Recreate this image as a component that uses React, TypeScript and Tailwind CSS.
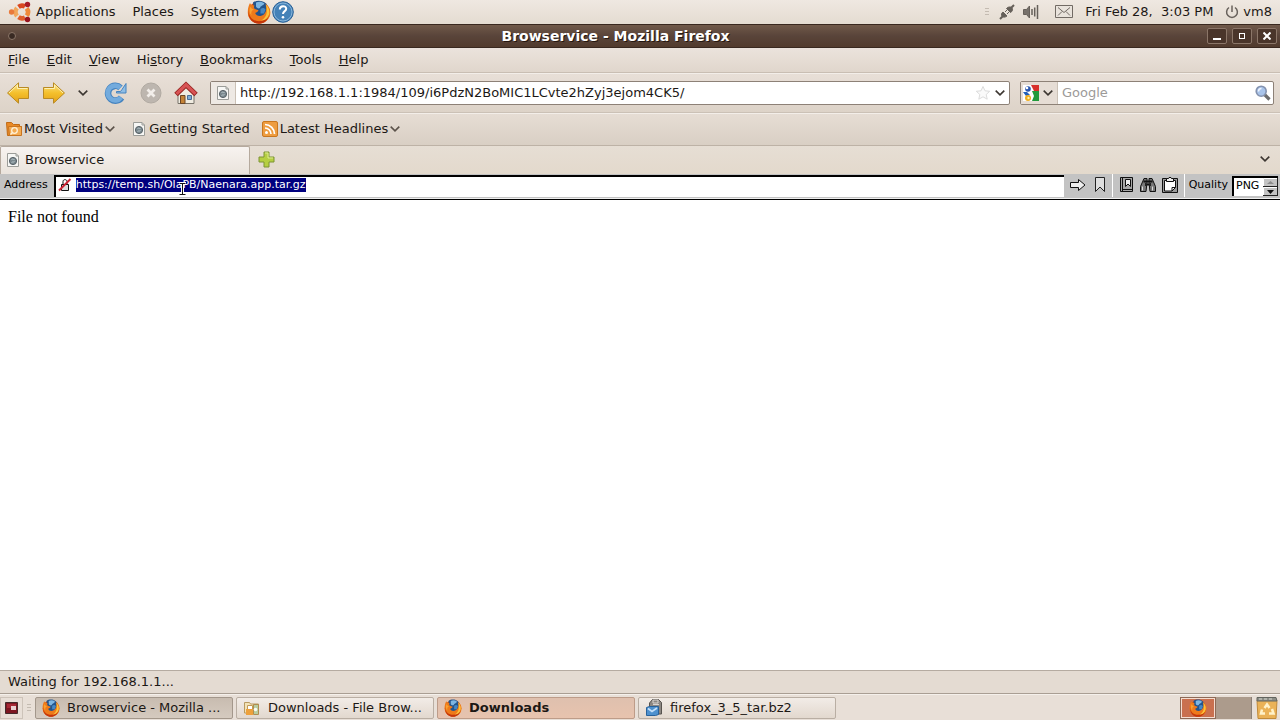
import React from "react";

interface MenuEntry {
  hotkey: string;
  before?: string;
  after: string;
}

const menus: MenuEntry[] = [
  { hotkey: "F", after: "ile" },
  { hotkey: "E", after: "dit" },
  { hotkey: "V", after: "iew" },
  { before: "Hi", hotkey: "s", after: "tory" },
  { hotkey: "B", after: "ookmarks" },
  { hotkey: "T", after: "ools" },
  { hotkey: "H", after: "elp" },
];

function Chevron({ className = "text-[#3c3631]" }: { className?: string }) {
  return (
    <svg className={className} width="10" height="6" viewBox="0 0 10 6" fill="none" stroke="currentColor" strokeWidth="1.600">
      <path d="M.7 .7L5 4.8L9.3 .7" />
    </svg>
  );
}

function FirefoxIcon({ size = 18 }: { size?: number }) {
  return (
    <svg width={size} height={size} viewBox="0 0 24 24">
      <circle cx="12" cy="12.500" r="11" fill="#d9500f" />
      <path d="M6 2.500C9.500 0 15.500 0 19 3.500c2.500 3 2.500 9-.5 12.500-3 3-8 3-11 0z" fill="#23548c" />
      <path d="M9 2.500c3-1.500 6-1 8.500 1-1.500 2.500-4 2-4.500 4.500-1.500 1-3.500 0-4-1.500z" fill="#7db6e2" />
      <path d="M13.500 9c2-1.500 4-1 5 .5l-1.500 4-3.500 0z" fill="#4687c2" />
      <path d="M3 3c.8 1.800 2.200 2.500 4.500 2.500C6.500 7 6.800 8.300 8 9l3.500 1.200c-.5 1.600-2 2.200-3.300 2.800.8 2.500 3.500 3.500 6 2.800 4-1.200 6.300-5.300 4.300-11.800 4 2.500 6 7 4.300 12-1.500 4.500-5.800 7.300-10.800 7.300C5.800 23.300 1 18.800.8 12.800.7 9 1.500 5.500 3 3z" fill="#ee7a1a" />
      <path d="M1.500 10c0 5.500 3 10 8.500 11 5 .8 9.500-1.800 12-7-.3 5.500-4.500 9.800-10 9.800C5.500 23.800.5 18 1.500 10z" fill="#c5370b" />
      <path d="M19 4.500c3.500 3.500 4.300 8.500 2.300 12-1.500 2.800-4.300 4.200-7.300 4 5.500-2.500 7-8.500 5-16z" fill="#fdc238" />
      <path d="M3.500 6.500c.5 1.700 1.500 2.500 3.500 3-2.300.6-3.300 3-2.500 6-2.300-2.500-2.500-6-1-9z" fill="#f9a231" />
    </svg>
  );
}

function UbuntuIcon() {
  return (
    <svg width="24" height="22" viewBox="0 0 24 22" fill="none">
      <path d="M10.500 5.800A6.200 6.200 0 0 1 17 5.500" stroke="#d9481f" strokeWidth="4.600" />
      <path d="M18.700 7.300A6.200 6.200 0 0 1 18.700 14.700" stroke="#ef8a3a" strokeWidth="4.600" />
      <path d="M9 7A6.200 6.200 0 0 0 9 15" stroke="#f2a65a" strokeWidth="4.600" />
      <path d="M10.500 16.200a6.200 6.200 0 0 0 6.500 .3" stroke="#df5f2c" strokeWidth="4.600" />
      <circle cx="3.600" cy="11" r="2.700" fill="#e9793a" />
      <circle cx="19.500" cy="3.500" r="2.700" fill="#a81c26" />
      <circle cx="19.500" cy="18.500" r="2.700" fill="#981420" />
    </svg>
  );
}

function HelpIcon() {
  return (
    <svg width="22" height="22" viewBox="0 0 22 22" fill="none">
      <circle cx="11" cy="11" r="10.300" fill="#4482b8" stroke="#275f96" />
      <circle cx="11" cy="11" r="9" stroke="#8ab6da" />
      <path d="M7.800 8.500c0-4.400 6.400-4.200 6.400-.8 0 2.500-3.200 2.400-3.200 5.300" stroke="#fff" strokeWidth="2" />
      <circle cx="11" cy="16.300" r="1.300" fill="#fff" />
    </svg>
  );
}

function PageIcon() {
  return (
    <svg width="16" height="16" viewBox="0 0 16 16" fill="none">
      <path d="M2.500 1.500h8.500l2.500 2.500v10.500h-11z" fill="#f7f7f5" stroke="#9b9c98" />
      <path d="M11 1.500v2.500h2.500" stroke="#9b9c98" />
      <circle cx="8" cy="9" r="3.600" fill="#7b898f" stroke="#586268" />
      <path d="M6.500 7.500c1.500-1 2 .5 3 0M6.500 10.500c1-1 2 0 3-1" stroke="#b9c7cc" />
    </svg>
  );
}

function ArrowIcon({ flip = false }: { flip?: boolean }) {
  return (
    <svg className={flip ? "-scale-x-100" : ""} width="24" height="22" viewBox="0 0 24 22" fill="none">
      <defs>
        <linearGradient id="gold" x1="0" y1="0" x2="0" y2="1">
          <stop offset="0" stopColor="#fbe488" />
          <stop offset=".5" stopColor="#f4c02c" />
          <stop offset="1" stopColor="#e3a018" />
        </linearGradient>
      </defs>
      <path d="M1.500 5.500h10V.8L22.500 11 11.500 21.200v-4.700h-10z" fill="url(#gold)" stroke="#b98a24" />
      <path d="M2.500 6.500h10V3L21 11" stroke="#fdf1b5" />
    </svg>
  );
}

function ReloadIcon() {
  return (
    <svg width="24" height="22" viewBox="0 0 24 22" fill="none">
      <path d="M17.500 15.500A7.400 7.400 0 1 1 16.500 5.800" stroke="#4583bf" strokeWidth="6.600" />
      <path d="M17 15.500A7.400 7.400 0 1 1 16.500 5.800" stroke="#73abdd" strokeWidth="4.800" />
      <path d="M22 1.500v9.500h-9.500V9.500h4l1.500-2z" fill="#8dbde6" stroke="#4583bf" />
    </svg>
  );
}

function StopIcon() {
  return (
    <svg width="22" height="22" viewBox="0 0 22 22" fill="none">
      <circle cx="11" cy="11" r="10" fill="#bdb6af" stroke="#b1aaa2" />
      <path d="M7.500 7.500l7 7m0-7l-7 7" stroke="#f2eeea" strokeWidth="2.800" />
    </svg>
  );
}

function HomeIcon() {
  return (
    <svg width="24" height="24" viewBox="0 0 24 24" fill="none">
      <path d="M4 12L12 5l8 7v10.500H4z" fill="#f0ece1" stroke="#77736a" />
      <path d="M6.500 14.500h4.500v8H6.500z" fill="#c58336" stroke="#6b4524" />
      <path d="M13.500 14.500h4v4h-4z" fill="#7fabd4" stroke="#486d96" />
      <path d="M2 13.500L12 4l10 9.500" stroke="#96231f" strokeWidth="5" />
      <path d="M2.500 12.800L12 3.800l9.500 9" stroke="#d75354" strokeWidth="3.200" />
    </svg>
  );
}

function StarIcon() {
  return (
    <svg width="16" height="16" viewBox="0 0 16 16" fill="none">
      <path d="M8 1.500l2 4.300 4.700.5-3.500 3.200 1 4.700L8 11.800l-4.200 2.400 1-4.700L1.300 6.300 6 5.800z" fill="#fafafa" stroke="#dcdcdc" />
    </svg>
  );
}

function GoogleIcon() {
  return (
    <svg width="16" height="16" viewBox="0 0 16 16">
      <path d="M0 0h16v16H0z" fill="#fff" />
      <path d="M8 0h8v6h-5z" fill="#d8302c" />
      <path d="M9 6h7v10H9l2-5z" fill="#229a3c" />
      <circle cx="5" cy="4" r="2.800" fill="#2856b0" />
      <circle cx="4" cy="3" r="1.300" fill="#fff" />
      <path d="M0 7l4 0 3 3-4 1z" fill="#2460b8" />
      <circle cx="5" cy="13" r="3" fill="#f1ae1c" />
      <circle cx="5.500" cy="13" r="1.200" fill="#fff1b5" />
    </svg>
  );
}

function MagnifierIcon() {
  return (
    <svg width="16" height="16" viewBox="0 0 16 16" fill="none">
      <path d="M9.500 9.500l5 5" stroke="#6c6c6c" strokeWidth="3.200" />
      <circle cx="6.200" cy="6.200" r="5" fill="#a9c4ea" stroke="#8492ae" strokeWidth="1.600" />
      <path d="M3.500 6.500c0-2 1-3 3-3" stroke="#f1f6ff" strokeWidth="1.500" />
    </svg>
  );
}

function MostVisitedIcon() {
  return (
    <svg width="16" height="16" viewBox="0 0 16 16" fill="none">
      <path d="M.5 1.500h5l2 2h6v2h2l-1 9h-13z" fill="#e98a26" stroke="#c06a15" />
      <path d="M2.500 5.500h13v9h-12z" fill="#f4ab52" stroke="#c87420" />
      <circle cx="8.500" cy="9.500" r="2.800" stroke="#fff1d8" strokeWidth="1.300" />
      <path d="M6.500 11.500l-2 2" stroke="#fff1d8" strokeWidth="1.500" />
    </svg>
  );
}

function FeedIcon() {
  return (
    <svg width="16" height="16" viewBox="0 0 16 16" fill="none">
      <rect x=".5" y=".5" width="15" height="15" rx="1.500" fill="#ee9d40" stroke="#c9771f" />
      <circle cx="4.500" cy="11.500" r="1.500" fill="#fff" />
      <path d="M3 7a6 6 0 0 1 6 6M3 3.500A9.500 9.500 0 0 1 12.500 13" stroke="#fff" strokeWidth="1.700" />
    </svg>
  );
}

function PlusIcon() {
  return (
    <svg width="17" height="17" viewBox="0 0 17 17">
      <path d="M6 1h5v5h5v5h-5v5H6v-5H1V6h5z" fill="#b6cf42" stroke="#7c9432" />
      <path d="M7 2h3v5h5" fill="none" stroke="#dcea90" />
    </svg>
  );
}

function NetworkIcon() {
  return (
    <svg width="16" height="16" viewBox="0 0 16 16" fill="none" stroke="#66605a">
      <path d="M1 15l4-4M11.500 4.500L15 1" strokeWidth="2" />
      <path d="M4 8l4 4c-2 1.500-4 1.500-5 0-1-1.300-.5-3 1-4z" fill="#66605a" />
      <path d="M7.500 4.500l4 4C13.500 7.500 14 5.500 13 4s-4-1.500-5.500.5zM6 8l2-2M8 10l2-2" fill="#66605a" />
    </svg>
  );
}

function VolumeIcon() {
  return (
    <svg width="16" height="16" viewBox="0 0 16 16" fill="none" stroke="#66605a">
      <path d="M.5 5.500h3l3-3.500v12l-3-3.500h-3z" fill="#77716b" />
      <path d="M9 5v6M11.700 3.500v9M14.500 1v14" strokeWidth="1.500" />
    </svg>
  );
}

function MailIcon() {
  return (
    <svg width="18" height="13" viewBox="0 0 18 13" fill="none" stroke="#716a64">
      <path d="M.5 .5h17v12H.5z" fill="#e9e3dc" />
      <path d="M3 2.500l6 5 6-5M3 10.500l4-4M15 10.500l-4-4" />
    </svg>
  );
}

function PowerIcon() {
  return (
    <svg width="14" height="14" viewBox="0 0 14 14" fill="none" stroke="#69625c" strokeWidth="1.500">
      <path d="M4 2.500a5.400 5.400 0 1 0 6 0M7 .5v6.500" />
    </svg>
  );
}

function FileBrowserIcon() {
  return (
    <svg width="18" height="16" viewBox="0 0 18 16" fill="none">
      <path d="M1.500 2.500h5l1 1.500h8v9H1.500z" fill="#f3e3b8" stroke="#b89a60" />
      <path d="M4.500 5.500h5v8h-5z" fill="#fff" stroke="#c29a55" />
      <path d="M10.500 4.500h5v10h-5z" fill="#b8cda0" stroke="#b08d50" />
      <path d="M3 9h7v6H3z" fill="#eda13c" />
      <circle cx="12.500" cy="9.500" r="1.800" fill="#f8faf5" />
    </svg>
  );
}

function ArchiveIcon() {
  return (
    <svg width="18" height="17" viewBox="0 0 18 17" fill="none">
      <path d="M4.500 8V4l3-3.500h6l3 3V15h-4" fill="#8c8782" stroke="#57534f" />
      <path d="M8 1h5v3H8zM8 5.500h6" stroke="#d9d4cf" />
      <path d="M1.500 8.500l3-1h9v8l-3 1h-9z" fill="#4e91ce" stroke="#28629b" />
      <path d="M3 9.500l4 3 5-3.500" stroke="#c4e0fa" strokeWidth="1.600" />
    </svg>
  );
}

function TrashIcon() {
  return (
    <svg width="22" height="22" viewBox="0 0 22 22" fill="none">
      <path d="M1 3.500h20l-1 18h-18z" fill="#eab257" stroke="#c08a3a" />
      <path d="M1 .5h19l1 3.500H1z" fill="#8c8d86" stroke="#62645e" />
      <path d="M3 2h3m2 0h3m2 0h3" stroke="#d5d8d0" />
      <path d="M8.500 11L11 7.500l2.500 3.500M6 12.500l-1 4h4M16 12l1.500 4.500H13" stroke="#fff2ca" strokeWidth="2.500" />
    </svg>
  );
}

function NoLockIcon() {
  return (
    <svg width="14" height="14" viewBox="0 0 14 14" fill="none">
      <path d="M3.500 6.500h7v6h-7z" fill="#ddd" stroke="#111" />
      <path d="M5 6V3.500C5 1 9 1 9 3.500V6" stroke="#111" />
      <path d="M1 12.500L12.500 1" stroke="#cc2233" strokeWidth="2" />
    </svg>
  );
}

function GoIcon() {
  return (
    <svg width="16" height="14" viewBox="0 0 16 14" fill="none">
      <path d="M.5 4.500h8v-3l6.500 5.500-6.500 5.500v-3h-8z" fill="#eee" stroke="#111" />
    </svg>
  );
}

function BookmarkIcon() {
  return (
    <svg width="12" height="16" viewBox="0 0 12 16" fill="none">
      <path d="M1.500 .5h9v14L6 10l-4.500 4.500z" fill="#dedede" stroke="#222" />
    </svg>
  );
}

function BookIcon() {
  return (
    <svg width="15" height="16" viewBox="0 0 15 16" fill="none">
      <path d="M1.500 .5h12v14h-12z" fill="#a7a7a7" stroke="#111" />
      <path d="M3.500 1v14M4 12.500h10" stroke="#111" />
      <path d="M6.500 2.500h5v7L9 7l-2.500 2.500z" fill="#eee" stroke="#111" />
    </svg>
  );
}

function BinocularsIcon() {
  return (
    <svg width="16" height="16" viewBox="0 0 16 16" fill="none" stroke="#111">
      <path d="M4 1.500h3v4l-1 9H.5v-5zM12 1.500H9v4l1 9h5.500v-5z" fill="#777" />
      <path d="M3.500 4.500h9M6.500 7.500h3" strokeWidth="2" />
      <path d="M2.500 9.500v4M12.500 9.500v4" stroke="#ddd" />
      <path d="M5.500 6v3M10.500 6v3" stroke="#222" />
    </svg>
  );
}

function ClipboardIcon() {
  return (
    <svg width="16" height="16" viewBox="0 0 16 16" fill="none" stroke="#111">
      <path d="M.5 1.500h15v14H.5z" fill="#999" />
      <path d="M2.500 3.500h11v7l-3.500 3.500H2.500z" fill="#fff" />
      <path d="M13.500 10.500H10V14" />
      <path d="M4.500 1.500h2c0-1.500 3-1.500 3 0h2v3h-7z" fill="#eee" />
    </svg>
  );
}

function IBeam() {
  return (
    <svg width="9" height="16" viewBox="0 0 9 16" fill="none">
      <path d="M1 2.500h7M4.500 2.500v11M1 13.500h7" stroke="#fff" strokeWidth="3" />
      <path d="M1.500 2.500h6M4.500 2.500v11M1.500 13.500h6" stroke="#111" />
    </svg>
  );
}

function Grip() {
  return (
    <span className="flex w-2 flex-col gap-0.5 px-0.5">
      <span className="h-px bg-[#c4bbb1]" />
      <span className="h-px bg-[#c4bbb1]" />
      <span className="h-px bg-[#c4bbb1]" />
    </span>
  );
}

function TopPanel() {
  return (
    <header className="flex h-6 shrink-0 items-center bg-linear-to-b from-[#efe8e1] to-[#e4dcd1] pb-px text-[13px]">
      <button className="flex items-center gap-1 pl-2" type="button">
        <UbuntuIcon />
        Applications
      </button>
      <button className="pl-[17px]" type="button">Places</button>
      <button className="pl-[17px]" type="button">System</button>
      <button className="ml-2 flex" type="button" aria-label="Firefox"><FirefoxIcon size={24} /></button>
      <button className="ml-px flex" type="button" aria-label="Help"><HelpIcon /></button>

      <div className="ml-auto flex items-center pr-2">
        <Grip />
        <span className="ml-2"><NetworkIcon /></span>
        <span className="ml-2"><VolumeIcon /></span>
        <span className="ml-4"><MailIcon /></span>
        <button className="ml-3 whitespace-pre" type="button">Fri Feb 28,  3:03 PM</button>
        <button className="ml-3 flex items-center gap-1" type="button">
          <PowerIcon />
          vm8
        </button>
      </div>
    </header>
  );
}

function TitleBar() {
  const button = "flex h-4 w-5 items-center justify-center rounded-xs border border-[#8b7668] bg-[#4a352a]";
  return (
    <div className="flex h-6 shrink-0 items-center border-y border-[#39281f] bg-linear-to-b from-[#705949] via-[#59443a] to-[#523b2d] pr-[3px] pl-2">
      <span className="h-2 w-2 rounded-full border border-[#8b7668] bg-[#392a23]" />
      <h1 className="flex-1 pl-2 text-center text-sm font-bold text-white [text-shadow:1px_1px_0_#251710]">
        Browservice - Mozilla Firefox
      </h1>
      <div className="flex gap-[5px]">
        <button className={button} type="button" aria-label="Minimize"><span className="mt-1.5 h-0.5 w-2 bg-white" /></button>
        <button className={button} type="button" aria-label="Maximize"><span className="h-1.5 w-1.5 border border-white" /></button>
        <button className={button} type="button" aria-label="Close">
          <svg width="8" height="8" viewBox="0 0 8 8" stroke="#fff" strokeWidth="2"><path d="M.5 .5l7 7m0-7l-7 7" /></svg>
        </button>
      </div>
    </div>
  );
}

function MenuBar() {
  return (
    <nav className="flex h-[25px] shrink-0 items-center gap-[17px] border-b border-[#c9beb3] bg-linear-to-b from-[#ebe3dc] to-[#e0d6cc] px-2 text-[13px]">
      {menus.map((menu) => (
        <button key={menu.hotkey + menu.after} type="button">
          {menu.before}
          <span className="underline">{menu.hotkey}</span>
          {menu.after}
        </button>
      ))}
    </nav>
  );
}

function Toolbar() {
  return (
    <div className="flex h-10 shrink-0 items-center border-t border-b border-t-[#f3eee9] border-b-[#cbc1b6] bg-linear-to-b from-[#e8dfd7] to-[#ddd3c8] px-1.5 text-[13px]">
      <button className="flex" type="button" aria-label="Back"><ArrowIcon flip /></button>
      <button className="ml-3 flex" type="button" aria-label="Forward"><ArrowIcon /></button>
      <button className="ml-3 flex" type="button" aria-label="History"><Chevron /></button>
      <button className="ml-4 flex" type="button" aria-label="Reload"><ReloadIcon /></button>
      <button className="ml-3 flex" type="button" aria-label="Stop"><StopIcon /></button>
      <button className="ml-3 flex" type="button" aria-label="Home"><HomeIcon /></button>

      <div className="ml-3 flex h-6 flex-1 items-center rounded-xs border border-[#8d8177] bg-white pr-1">
        <span className="flex h-full w-[25px] items-center justify-center border-r border-[#cbc1b6] bg-[#eee9e4]"><PageIcon /></span>
        <input
          className="min-w-0 flex-1 px-1 outline-none"
          aria-label="Location"
          defaultValue="http://192.168.1.1:1984/109/i6PdzN2BoMIC1LCvte2hZyj3ejom4CK5/"
        />
        <StarIcon />
        <button className="ml-1 flex" type="button" aria-label="Show history"><Chevron /></button>
      </div>

      <div className="ml-2.5 flex h-6 w-[254px] items-center rounded-xs border border-[#8d8177] bg-white pr-0.5">
        <button className="flex h-full w-[37px] items-center gap-1 border-r border-[#cbc1b6] bg-[#e6ddd5] pl-0.5" type="button" aria-label="Search engine">
          <GoogleIcon />
          <Chevron />
        </button>
        <input className="min-w-0 flex-1 px-1 outline-none placeholder:text-[#9c9a98]" aria-label="Search" placeholder="Google" />
        <button className="flex" type="button" aria-label="Search"><MagnifierIcon /></button>
      </div>
    </div>
  );
}

function BookmarksBar() {
  return (
    <div className="flex h-[33px] shrink-0 items-center gap-4 border-t border-b border-t-[#f3eee9] border-b-[#bdb2a6] bg-linear-to-b from-[#e6ddd4] to-[#d9cfc4] px-1.5 pb-0.5 text-[13px]">
      <button className="flex items-center gap-0.5" type="button"><MostVisitedIcon />Most Visited<Chevron className="text-[#5b524a]" /></button>
      <a className="flex items-center gap-0.5" href="#started"><PageIcon />Getting Started</a>
      <button className="-ml-1 flex items-center gap-0.5" type="button"><FeedIcon />Latest Headlines<Chevron className="text-[#5b524a]" /></button>
    </div>
  );
}

function TabStrip() {
  return (
    <div className="flex h-7 shrink-0 items-center bg-linear-to-b from-[#e6ded4] to-[#e3d9cc] pr-2.5 text-[13px]">
      <button className="flex h-full w-[250px] items-center gap-1 rounded-t-xs border-x border-t border-[#b5a99d] bg-linear-to-b from-[#f7f3f0] to-[#eae3dc] pb-0.5 pl-1" type="button">
        <PageIcon />
        Browservice
      </button>
      <button className="ml-2 flex pb-0.5" type="button" aria-label="New tab"><PlusIcon /></button>
      <button className="ml-auto flex pb-0.5" type="button" aria-label="List all tabs"><Chevron /></button>
    </div>
  );
}

function AddressBar() {
  return (
    <div className="flex h-[26px] shrink-0 items-stretch border-b border-black bg-[#c3c3c3] pb-0.5 text-[11px] text-black shadow-[inset_0_-1px_0_#eeeeee]">
      <label className="flex items-center px-1" htmlFor="address">Address</label>
      <div className="relative mt-px flex flex-1 items-center border-t-2 border-l-2 border-black bg-white pb-1 pl-0.5 ml-0.5">
        <NoLockIcon />
        <input
          id="address"
          className="field-sizing-content ml-1 h-3.5 bg-[#00007f] text-white outline-none"
          defaultValue="https://temp.sh/OlaPB/Naenara.app.tar.gz"
        />
        <span className="pointer-events-none absolute top-1 left-[122px]"><IBeam /></span>
      </div>
      <div className="flex items-center gap-2 border-r border-white px-1.5 pb-0.5">
        <button className="flex" type="button" aria-label="Go"><GoIcon /></button>
        <button className="flex" type="button" aria-label="Bookmark"><BookmarkIcon /></button>
      </div>
      <div className="flex items-center gap-1.5 border-r border-white px-1.5 pb-0.5">
        <button className="flex" type="button" aria-label="Bookmarks"><BookIcon /></button>
        <button className="flex" type="button" aria-label="Find"><BinocularsIcon /></button>
        <button className="flex" type="button" aria-label="Clipboard"><ClipboardIcon /></button>
      </div>
      <div className="flex items-center gap-1 pr-0.5 pl-1">
        <label htmlFor="quality">Quality</label>
        <div className="relative flex h-5 w-[46px] border-t-2 border-l-2 border-black bg-white">
          <select id="quality" className="w-full appearance-none pl-0.5 outline-none">
            <option>PNG</option>
            <option>JPEG</option>
          </select>
          <svg className="pointer-events-none absolute top-0 right-0" width="15" height="18" viewBox="0 0 15 18">
            <path d="M0 0h15v18H0z" fill="#c3c3c3" />
            <path d="M0 8.500h15M0 17.500h15M14.500 0v18" stroke="#222" />
            <path d="M.5 8V.5H14M.5 17V9.500H14" fill="none" stroke="#fff" />
            <path d="M4 6h7L7.500 3z" fill="#8d8d8d" />
            <path d="M4 12h7l-3.500 4z" fill="#111" />
          </svg>
        </div>
      </div>
    </div>
  );
}

function TaskBar() {
  const task = "flex h-[22px] w-[198px] items-center gap-[7px] rounded-xs border px-1.5 text-left";
  return (
    <footer className="flex h-[26px] shrink-0 items-center border-t border-[#f5f0eb] bg-[#e8dfd7] text-[13px]">
      <button className="flex h-[22px] w-[23px] items-center justify-center border border-[#cdc3b9]" type="button" aria-label="Show desktop">
        <svg width="13" height="12" viewBox="0 0 13 12">
          <path d="M.5 .5h12v11H.5z" fill="#7d1722" stroke="#442a2b" />
          <path d="M2 2h9v4H2z" fill="#a62835" />
          <path d="M6 4h5v4H6z" fill="#e9cfd0" />
        </svg>
      </button>
      <span className="mx-0.5"><Grip /></span>
      <div className="flex gap-[3px]">
        <button className={`${task} border-[#a3978b] bg-linear-to-b from-[#c8bcb0] to-[#d5cabf]`} type="button">
          <FirefoxIcon />
          Browservice - Mozilla ...
        </button>
        <button className={`${task} border-[#b9aea3] bg-linear-to-b from-[#f2ece7] to-[#e2d8ce]`} type="button">
          <FileBrowserIcon />
          Downloads - File Brow...
        </button>
        <button className={`${task} border-[#bd9c89] bg-linear-to-b from-[#dfc0ae] to-[#e7c3ae] font-bold`} type="button">
          <FirefoxIcon />
          Downloads
        </button>
        <button className={`${task} border-[#b9aea3] bg-linear-to-b from-[#f2ece7] to-[#e2d8ce]`} type="button">
          <ArchiveIcon />
          firefox_3_5_tar.bz2
        </button>
      </div>
      <div className="ml-auto flex items-center pr-0.5">
        <button className="flex h-[22px] w-9 items-center justify-center border border-[#8d6a57] bg-[#c9704f]" type="button" aria-label="Workspace 1">
          <span className="flex h-full w-full items-center justify-center border border-[#f5ddd0]"><FirefoxIcon size={18} /></span>
        </button>
        <button className="h-[22px] w-9 border-r border-[#8d8177] bg-[#ac9b8c]" type="button" aria-label="Workspace 2" />
        <button className="ml-1 flex" type="button" aria-label="Trash"><TrashIcon /></button>
      </div>
    </footer>
  );
}

export default function App() {
  return (
    <div className="flex h-screen flex-col overflow-hidden bg-white font-['DejaVu_Sans',sans-serif] text-[#1c1815]">
      <TopPanel />
      <TitleBar />
      <MenuBar />
      <Toolbar />
      <BookmarksBar />
      <TabStrip />
      <AddressBar />
      <main className="min-h-0 flex-1 bg-white p-2 font-['Liberation_Serif',serif] text-base leading-[18px] text-black">
        <p>File not found</p>
      </main>
      <div className="flex h-6 shrink-0 items-center border-t border-b border-t-[#b5aba1] border-b-[#a99e93] bg-[#e4dbd2] px-2 text-[13px]" role="status">
        Waiting for 192.168.1.1...
      </div>
      <TaskBar />
    </div>
  );
}
